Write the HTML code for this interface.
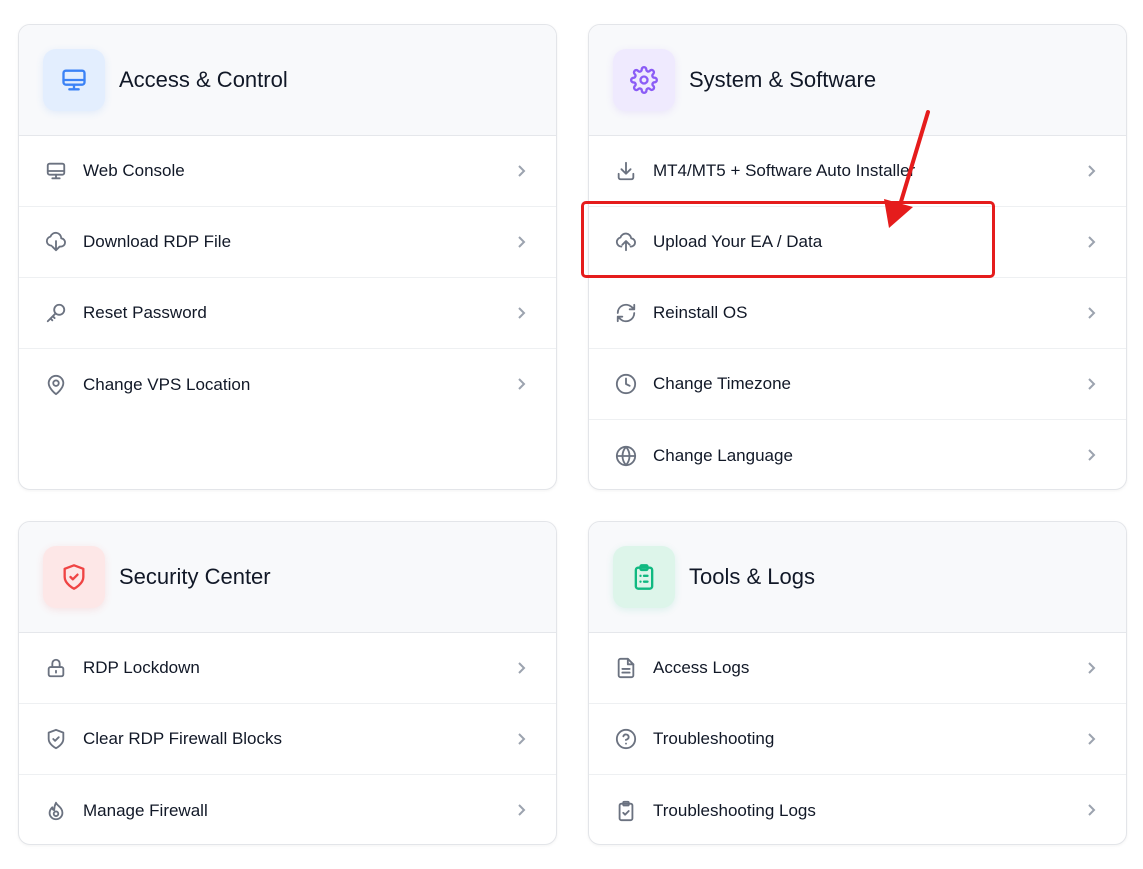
<!DOCTYPE html>
<html><head><meta charset="utf-8"><style>
*{box-sizing:border-box;margin:0;padding:0}
body{width:1143px;height:869px;background:#fff;font-family:"Liberation Sans",sans-serif;position:relative;overflow:hidden}
.card{position:absolute;width:539px;border:1px solid #e3e5e9;border-radius:12px;background:#fff;overflow:hidden;box-shadow:0 1px 3px rgba(0,0,0,.05)}
.hd{height:111px;background:#f8f9fb;border-bottom:1px solid #e5e7eb;display:flex;align-items:center;padding-left:24px}
.ib{width:62px;height:62px;border-radius:13px;display:flex;align-items:center;justify-content:center;margin-right:14px}
.hd h2{font-size:22px;font-weight:normal;color:#111827}
.row{height:71px;border-bottom:1px solid #eef0f2;display:flex;align-items:center;padding-left:26px;position:relative;font-size:17px;color:#111827}
.row:last-child{border-bottom:none}
.row svg.ic{width:22px;height:22px;margin-right:16px;stroke:#6b7280;fill:none;stroke-width:2;stroke-linecap:round;stroke-linejoin:round}
.row .ch{position:absolute;right:28px;top:28px;width:14px;height:14px;stroke:#9ca3af;fill:none;stroke-width:2}
.hd svg{width:28px;height:28px;fill:none;stroke-width:2;stroke-linecap:round;stroke-linejoin:round}
</style></head><body>
<svg width="0" height="0" style="position:absolute"><defs><symbol id="chev" viewBox="0 0 14 14"><path d="M5 2l5 5-5 5"/></symbol></defs></svg>

<div class="card" style="left:18px;top:24px;height:466px">
 <div class="hd"><div class="ib" style="background:#e3eefe;box-shadow:0 2px 8px rgba(59,130,246,.12)"><svg viewBox="0 0 24 24" stroke="#3b82f6"><rect x="3" y="4" width="18" height="12" rx="2"/><path d="M3 12h18M12 16v4M8 20h8"/></svg></div><h2>Access &amp; Control</h2></div>
 <div class="row"><svg class="ic" viewBox="0 0 24 24"><rect x="3" y="4" width="18" height="12" rx="2"/><path d="M3 12h18M12 16v4M8 20h8"/></svg>Web Console<svg class="ch"><use href="#chev"/></svg></div>
 <div class="row"><svg class="ic" viewBox="0 0 24 24"><path d="M7 16a5 5 0 0 1-1-9.9A6 6 0 0 1 17.7 8 4.5 4.5 0 0 1 17 17M12 11v10M8 17l4 4 4-4"/></svg>Download RDP File<svg class="ch"><use href="#chev"/></svg></div>
 <div class="row"><svg class="ic" viewBox="0 0 24 24"><circle cx="15.5" cy="8.5" r="5.5"/><path d="M11.5 12.5L3 21M6 18l2 2M8.5 15.5l2 2"/></svg>Reset Password<svg class="ch"><use href="#chev"/></svg></div>
 <div class="row"><svg class="ic" viewBox="0 0 24 24"><path d="M20 10c0 6-8 12-8 12S4 16 4 10a8 8 0 0 1 16 0z"/><circle cx="12" cy="10" r="3"/></svg>Change VPS Location<svg class="ch"><use href="#chev"/></svg></div>
</div>

<div class="card" style="left:588px;top:24px;height:466px">
 <div class="hd"><div class="ib" style="background:#efeafe;box-shadow:0 2px 8px rgba(139,92,246,.12)"><svg viewBox="0 0 24 24" stroke="#8b5cf6"><circle cx="12" cy="12" r="3"/><path d="M19.4 15a1.7 1.7 0 0 0 .3 1.8l.1.1a2 2 0 1 1-2.8 2.8l-.1-.1a1.7 1.7 0 0 0-1.8-.3 1.7 1.7 0 0 0-1 1.5V21a2 2 0 1 1-4 0v-.1a1.7 1.7 0 0 0-1.1-1.5 1.7 1.7 0 0 0-1.8.3l-.1.1a2 2 0 1 1-2.8-2.8l.1-.1a1.7 1.7 0 0 0 .3-1.8 1.7 1.7 0 0 0-1.5-1H3a2 2 0 1 1 0-4h.1a1.7 1.7 0 0 0 1.5-1.1 1.7 1.7 0 0 0-.3-1.8l-.1-.1a2 2 0 1 1 2.8-2.8l.1.1a1.7 1.7 0 0 0 1.8.3H9a1.7 1.7 0 0 0 1-1.5V3a2 2 0 1 1 4 0v.1a1.7 1.7 0 0 0 1 1.5 1.7 1.7 0 0 0 1.8-.3l.1-.1a2 2 0 1 1 2.8 2.8l-.1.1a1.7 1.7 0 0 0-.3 1.8V9a1.7 1.7 0 0 0 1.5 1H21a2 2 0 1 1 0 4h-.1a1.7 1.7 0 0 0-1.5 1z"/></svg></div><h2>System &amp; Software</h2></div>
 <div class="row"><svg class="ic" viewBox="0 0 24 24"><path d="M12 3v12M7 10l5 5 5-5M4 15v4a2 2 0 0 0 2 2h12a2 2 0 0 0 2-2v-4"/></svg>MT4/MT5 + Software Auto Installer<svg class="ch"><use href="#chev"/></svg></div>
 <div class="row"><svg class="ic" viewBox="0 0 24 24"><path d="M7 17a5 5 0 0 1-1-9.9A6 6 0 0 1 17.7 8 4.5 4.5 0 0 1 17 17M12 21V11M8 15l4-4 4 4"/></svg>Upload Your EA / Data<svg class="ch"><use href="#chev"/></svg></div>
 <div class="row"><svg class="ic" viewBox="0 0 24 24"><path d="M3 12a9 9 0 0 1 15-6.7L21 8M21 3v5h-5M21 12a9 9 0 0 1-15 6.7L3 16M3 21v-5h5"/></svg>Reinstall OS<svg class="ch"><use href="#chev"/></svg></div>
 <div class="row"><svg class="ic" viewBox="0 0 24 24"><circle cx="12" cy="12" r="10"/><path d="M12 6v6l4 2"/></svg>Change Timezone<svg class="ch"><use href="#chev"/></svg></div>
 <div class="row"><svg class="ic" viewBox="0 0 24 24"><circle cx="12" cy="12" r="10"/><path d="M2 12h20M12 2a15 15 0 0 1 0 20M12 2a15 15 0 0 0 0 20"/></svg>Change Language<svg class="ch"><use href="#chev"/></svg></div>
</div>

<div class="card" style="left:18px;top:521px;height:324px">
 <div class="hd"><div class="ib" style="background:#fde7e7;box-shadow:0 2px 8px rgba(239,68,68,.12)"><svg viewBox="0 0 24 24" stroke="#ef4444"><path d="M12 22s8-4 8-10V5l-8-3-8 3v7c0 6 8 10 8 10z"/><path d="M9 12l2 2 4-4"/></svg></div><h2>Security Center</h2></div>
 <div class="row"><svg class="ic" viewBox="0 0 24 24"><rect x="4" y="11" width="16" height="10" rx="2"/><path d="M8 11V7a4 4 0 0 1 8 0v4M12 15v2"/></svg>RDP Lockdown<svg class="ch"><use href="#chev"/></svg></div>
 <div class="row"><svg class="ic" viewBox="0 0 24 24"><path d="M12 22s8-4 8-10V5l-8-3-8 3v7c0 6 8 10 8 10z"/><path d="M9 12l2 2 4-4"/></svg>Clear RDP Firewall Blocks<svg class="ch"><use href="#chev"/></svg></div>
 <div class="row"><svg class="ic" viewBox="0 0 24 24"><path d="M12 3c1 3 7 5 7 11a7 7 0 0 1-14 0c0-3 2-5 3-6 0 2 1 3 2 3 0-3 1-6 2-8z"/><circle cx="12" cy="15" r="2.5"/></svg>Manage Firewall<svg class="ch"><use href="#chev"/></svg></div>
</div>

<div class="card" style="left:588px;top:521px;height:324px">
 <div class="hd"><div class="ib" style="background:#ddf5ea;box-shadow:0 2px 8px rgba(16,185,129,.12)"><svg viewBox="0 0 24 24" stroke="#10b981"><rect x="5" y="4" width="14" height="18" rx="2"/><rect x="9" y="2" width="6" height="4" rx="1"/><path d="M9 11h.01M12 11h3M9 16h.01M12 16h3"/></svg></div><h2>Tools &amp; Logs</h2></div>
 <div class="row"><svg class="ic" viewBox="0 0 24 24"><path d="M14 2H6a2 2 0 0 0-2 2v16a2 2 0 0 0 2 2h12a2 2 0 0 0 2-2V8z"/><path d="M14 2v6h6M8 13h8M8 17h8"/></svg>Access Logs<svg class="ch"><use href="#chev"/></svg></div>
 <div class="row"><svg class="ic" viewBox="0 0 24 24"><circle cx="12" cy="12" r="10"/><path d="M9.1 9a3 3 0 0 1 5.8 1c0 2-3 3-3 3M12 17h.01"/></svg>Troubleshooting<svg class="ch"><use href="#chev"/></svg></div>
 <div class="row"><svg class="ic" viewBox="0 0 24 24"><rect x="5" y="4" width="14" height="18" rx="2"/><rect x="9" y="2" width="6" height="4" rx="1"/><path d="M9 14l2 2 4-4"/></svg>Troubleshooting Logs<svg class="ch"><use href="#chev"/></svg></div>
</div>

<div style="position:absolute;left:581px;top:201px;width:414px;height:77px;border:3px solid #e51c1c;border-radius:5px"></div>
<svg style="position:absolute;left:0;top:0" width="1143" height="869"><path d="M928 112 L900 205" stroke="#e51c1c" stroke-width="4" stroke-linecap="round"/><path d="M884 199 L913 207 L889 228 Z" fill="#e51c1c"/></svg>
</body></html>
